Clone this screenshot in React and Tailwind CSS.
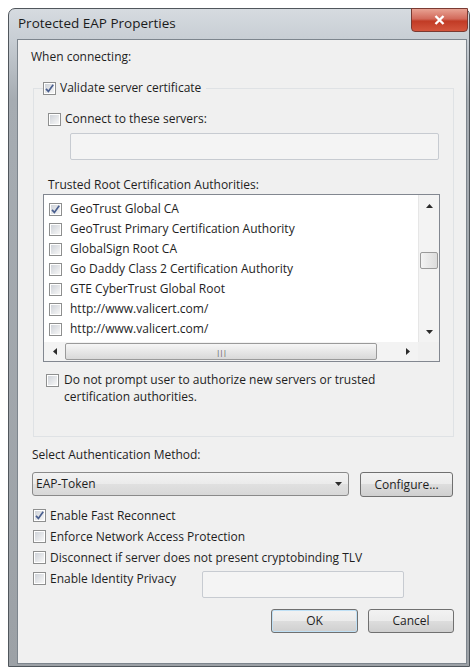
import React from 'react';

const CERTS = [
  { name: 'GeoTrust Global CA', checked: true },
  { name: 'GeoTrust Primary Certification Authority' },
  { name: 'GlobalSign Root CA' },
  { name: 'Go Daddy Class 2 Certification Authority' },
  { name: 'GTE CyberTrust Global Root' },
  { name: 'http://www.valicert.com/' },
  { name: 'http://www.valicert.com/' },
];

const CheckBox = ({ checked }) => (
  <span className="flex h-[13px] w-[13px] shrink-0 items-center justify-center border border-[#8e8f8f] bg-white">
    <span className="flex h-[9px] w-[9px] items-center justify-center bg-linear-to-br from-[#cfd3d9] to-[#f7f7f7]">
      {checked && (
        <svg className="h-[11px] w-[11px] shrink-0 overflow-visible" viewBox="0 0 11 11">
          <path d="M2 5.8 L4.4 8.4 L9.2 1.8" fill="none" stroke="#4a5f8f" strokeWidth="1.7" />
        </svg>
      )}
    </span>
  </span>
);

const Option = ({ checked, label, className = '' }) => (
  <div className={`flex items-center gap-[4px] ${className}`}>
    <CheckBox checked={checked} />
    <span>{label}</span>
  </div>
);

const Arrow = ({ dir }) => {
  const pts = {
    up: '0,4 3.5,0 7,4',
    down: '0,0 3.5,4 7,0',
    left: '4,0 0,3.5 4,7',
    right: '0,0 4,3.5 0,7',
  }[dir];
  const vertical = dir === 'up' || dir === 'down';
  return (
    <svg className={vertical ? 'h-[4px] w-[7px]' : 'h-[7px] w-[4px]'} viewBox={vertical ? '0 0 7 4' : '0 0 4 7'}>
      <polygon points={pts} fill="#2b2b2b" />
    </svg>
  );
};

const Button = ({ children, className = '' }) => (
  <button
    className={`h-[24px] rounded-[3px] border border-[#707070] bg-[linear-gradient(#f2f2f2,#ebebeb_50%,#dddddd_50%,#cfcfcf)] text-[#1e1e1e] ${className}`}
  >
    {children}
  </button>
);

const TextBox = ({ className = '' }) => (
  <div className={`rounded-[2px] border border-[#c7cbd1] bg-[#f4f4f4] ${className}`} />
);

export default function App() {
  return (
    <div className="min-h-screen bg-white pl-[8px] pt-[8px] font-['Open_Sans','Noto_Sans',sans-serif] text-[12px] leading-[16px] text-[#1e1e1e]">
      {/* window frame */}
      <div className="flex h-[659px] w-[462px] flex-col rounded-t-[7px] border border-[#50565c] bg-[linear-gradient(#d6dbe0,#c8ced4_30px,#a6acb2_90px,#9ca1a6)]">
        {/* title bar */}
        <div className="flex h-[30px] shrink-0 items-start justify-between">
          <span className="pl-[9px] pt-[6px] text-[13.5px] text-[#1b1b1b]">Protected EAP Properties</span>
          <div className="-mt-[1px] mr-[1px] flex h-[24px] w-[57px] items-center justify-center rounded-b-[4px] border border-[#7a3a32] bg-[linear-gradient(#e8a293,#d2695a_45%,#c13b25_55%,#d4553d)]">
            <svg className="h-[10px] w-[11px]" viewBox="0 0 11 10">
              <path d="M1.5 1 L9.5 9 M9.5 1 L1.5 9" stroke="#ffffff" strokeWidth="2.4" />
            </svg>
          </div>
        </div>

        {/* client area */}
        <div className="mb-[2px] ml-[8px] flex w-[450px] flex-1 flex-col border border-[#7d858d] bg-[#f0f0f0]">
          <div className="pl-[13px] pt-[9px]">When connecting:</div>

          <fieldset className="ml-[15px] mt-[15px] w-[421px] border border-[#dfe2e5] pb-[31px] pl-[9px] pr-[13px]">
            <legend className="pr-[5px]">
              <Option checked label="Validate server certificate" />
            </legend>

            <Option label="Connect to these servers:" className="ml-[5px] mt-[15px]" />
            <TextBox className="ml-[27px] mt-[6px] h-[27px] w-[369px]" />

            <div className="ml-[5px] mt-[17px]">Trusted Root Certification Authorities:</div>

            {/* certificate list */}
            <div className="mt-[1px] flex h-[168px] w-[397px] flex-col border border-[#828790] bg-white">
              <div className="flex min-h-0 flex-1">
                <div className="flex-1 overflow-hidden pl-[5px] pt-[4px]">
                  {CERTS.map((c, i) => (
                    <div key={i} className="flex h-[20px] items-center gap-[8px] whitespace-nowrap">
                      <CheckBox checked={c.checked} />
                      <span>{c.name}</span>
                    </div>
                  ))}
                </div>
                <div className="flex w-[21px] flex-col border-l border-[#e6e6e6] bg-[#f3f3f3]">
                  <div className="flex h-[21px] items-center justify-center">
                    <Arrow dir="up" />
                  </div>
                  <div className="mt-[36px] ml-[1px] h-[17px] w-[18px] rounded-[2px] border border-[#9a9a9a] bg-linear-to-r from-[#f4f4f4] to-[#dcdcdc]" />
                  <div className="flex-1" />
                  <div className="flex h-[21px] items-center justify-center">
                    <Arrow dir="down" />
                  </div>
                </div>
              </div>
              <div className="flex h-[19px] bg-[#f3f3f3]">
                <div className="flex w-[21px] items-center justify-center">
                  <Arrow dir="left" />
                </div>
                <div className="my-[1px] flex w-[312px] items-center justify-center rounded-[2px] border border-[#9a9a9a] bg-linear-to-b from-[#f6f6f6] to-[#d9d9d9] text-[8px] leading-none tracking-[-1px] text-[#555]">
                  |||
                </div>
                <div className="flex-1" />
                <div className="flex w-[21px] items-center justify-center">
                  <Arrow dir="right" />
                </div>
                <div className="w-[21px] bg-[#f0f0f0]" />
              </div>
            </div>

            <div className="ml-[3px] mt-[9px] flex items-start gap-[5px] leading-[17px]">
              <div className="mt-[3px]">
                <CheckBox />
              </div>
              <span>
                Do not prompt user to authorize new servers or trusted
                <br />
                certification authorities.
              </span>
            </div>
          </fieldset>

          <div className="ml-[14px] mt-[10px]">Select Authentication Method:</div>

          <div className="ml-[14px] mt-[9px] flex items-start gap-[11px]">
            <div className="flex h-[24px] w-[317px] items-center justify-between rounded-[3px] border border-[#8a8a8a] bg-[linear-gradient(#f2f2f2,#ebebeb_50%,#e0e0e0_50%,#d8d8d8)] pl-[3px] pr-[6px]">
              <span>EAP-Token</span>
              <Arrow dir="down" />
            </div>
            <Button className="h-[25px] w-[93px]">Configure...</Button>
          </div>

          <div className="ml-[15px] mt-[8px] flex flex-col">
            <Option checked label="Enable Fast Reconnect" className="h-[21px]" />
            <Option label="Enforce Network Access Protection" className="h-[21px]" />
            <Option label="Disconnect if server does not present cryptobinding TLV" className="h-[21px]" />
            <div className="flex items-start">
              <Option label="Enable Identity Privacy" className="h-[21px] w-[169px]" />
              <TextBox className="mt-[3px] h-[27px] w-[202px]" />
            </div>
          </div>

          <div className="mr-[12px] mt-[11px] flex justify-end gap-[10px]">
            <Button className="w-[87px] border-[#3c7fb1] shadow-[inset_0_0_0_1px_#bfe0f5]">OK</Button>
            <Button className="w-[86px]">Cancel</Button>
          </div>
        </div>
      </div>
    </div>
  );
}
